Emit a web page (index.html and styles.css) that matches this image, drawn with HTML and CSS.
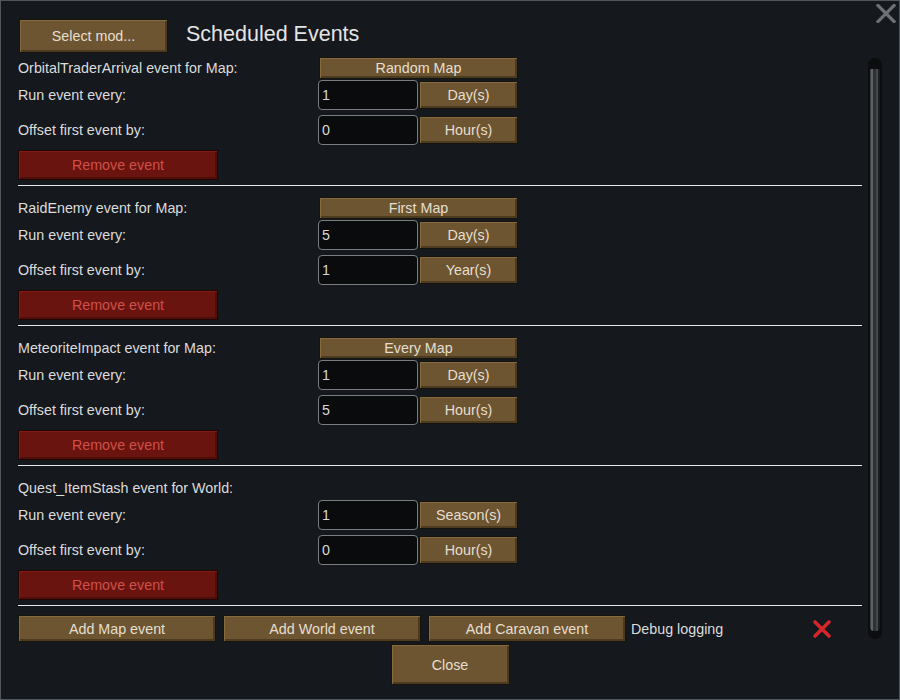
FILE: index.html
```html
<!DOCTYPE html>
<html>
<head>
<meta charset="utf-8">
<link rel="stylesheet" href="styles.css">
</head>
<body>
<div class="window">
  <svg class="close-x" width="20" height="19" viewBox="0 0 20 19">
    <path d="M2 1.5 L18 17.5 M18 1.5 L2 17.5" stroke="#6c7176" stroke-width="3.2" stroke-linecap="square"/>
  </svg>
  <div class="header">
    <div class="btn btn-mod">Select mod...</div>
    <div class="title">Scheduled Events</div>
  </div>
  <div class="main">
    <div class="list">
      <div class="section">
        <div class="row head"><div class="label">OrbitalTraderArrival event for Map:</div><div class="btn btn-map">Random Map</div></div>
        <div class="row r2"><div class="label">Run event every:</div><div class="input">1</div><div class="btn btn-unit">Day(s)</div></div>
        <div class="row r3"><div class="label">Offset first event by:</div><div class="input">0</div><div class="btn btn-unit">Hour(s)</div></div>
        <div class="btn-remove">Remove event</div>
        <div class="sep"></div>
      </div>
      <div class="section">
        <div class="row head"><div class="label">RaidEnemy event for Map:</div><div class="btn btn-map">First Map</div></div>
        <div class="row r2"><div class="label">Run event every:</div><div class="input">5</div><div class="btn btn-unit">Day(s)</div></div>
        <div class="row r3"><div class="label">Offset first event by:</div><div class="input">1</div><div class="btn btn-unit">Year(s)</div></div>
        <div class="btn-remove">Remove event</div>
        <div class="sep"></div>
      </div>
      <div class="section">
        <div class="row head"><div class="label">MeteoriteImpact event for Map:</div><div class="btn btn-map">Every Map</div></div>
        <div class="row r2"><div class="label">Run event every:</div><div class="input">1</div><div class="btn btn-unit">Day(s)</div></div>
        <div class="row r3"><div class="label">Offset first event by:</div><div class="input">5</div><div class="btn btn-unit">Hour(s)</div></div>
        <div class="btn-remove">Remove event</div>
        <div class="sep"></div>
      </div>
      <div class="section">
        <div class="row head"><div class="label">Quest_ItemStash event for World:</div></div>
        <div class="row r2"><div class="label">Run event every:</div><div class="input">1</div><div class="btn btn-unit">Season(s)</div></div>
        <div class="row r3"><div class="label">Offset first event by:</div><div class="input">0</div><div class="btn btn-unit">Hour(s)</div></div>
        <div class="btn-remove">Remove event</div>
        <div class="sep"></div>
      </div>
      <div class="actions">
        <div class="btn btn-add">Add Map event</div>
        <div class="btn btn-add">Add World event</div>
        <div class="btn btn-add">Add Caravan event</div>
        <div class="debug">Debug logging</div>
        <svg class="check" width="20" height="20" viewBox="0 0 20 20">
          <path d="M3 3 L17 17 M17 3 L3 17" stroke="#d4262b" stroke-width="3.6" stroke-linecap="round"/>
        </svg>
      </div>
    </div>
    <div class="scroll"><div class="thumb"></div></div>
  </div>
  <div class="footer">
    <div class="btn btn-close">Close</div>
  </div>
</div>
</body>
</html>
```

FILE: styles.css
```css
html, body {
  margin: 0;
  padding: 0;
  background: #15181d;
}
body {
  font-family: "Liberation Sans", Arial, sans-serif;
  font-size: 14.3px;
  color: #dcdcdc;
}
.window {
  position: relative;
  width: 900px;
  height: 700px;
  box-sizing: border-box;
  border: 1px solid #50565c;
  background: #15181d;
}
.close-x {
  position: absolute;
  top: 3px;
  right: 3px;
}
.header {
  display: flex;
  align-items: center;
  gap: 18px;
  height: 33px;
  margin: 18px 0 0 18px;
}
.title {
  font-size: 21.5px;
  color: #e4e4e4;
  padding-bottom: 3px;
}
.btn {
  box-sizing: border-box;
  flex: none;
  display: flex;
  align-items: center;
  justify-content: center;
  background: #6d5531;
  border: 1px solid #16140f;
  box-shadow: inset 1px 1px 0 #86693c, inset -2px -2px 0 #4d3b1f;
  color: #e6dfd0;
  white-space: nowrap;
}
.btn-mod {
  width: 149px;
  height: 34px;
}
.main {
  display: flex;
  margin-top: 5px;
}
.list {
  width: 844px;
  padding-left: 17px;
}
.row {
  display: flex;
  align-items: center;
}
.label {
  width: 300px;
  flex: none;
  white-space: nowrap;
}
.head {
  height: 22px;
}
.btn-map {
  width: 199px;
  height: 22px;
  margin-left: 1px;
}
.r2 {
  height: 30px;
  margin-top: 1px;
}
.r3 {
  height: 30px;
  margin-top: 5px;
}
.input {
  box-sizing: border-box;
  flex: none;
  width: 100px;
  height: 30px;
  background: #0a0b0c;
  border: 1px solid #7a7d80;
  border-radius: 4px;
  padding-left: 3px;
  display: flex;
  align-items: center;
  color: #d8d8d8;
}
.btn-unit {
  width: 99px;
  height: 28px;
  margin-left: 1px;
}
.btn-remove {
  box-sizing: border-box;
  width: 200px;
  height: 30px;
  margin-top: 5px;
  display: flex;
  align-items: center;
  justify-content: center;
  background: #6a140f;
  border: 1px solid #220604;
  box-shadow: inset 1px 1px 0 #7e1c15, inset -2px -2px 0 #4e0e0a;
  color: #cf4f4a;
}
.sep {
  height: 1px;
  background: #e8e8e8;
  margin: 5px 0 11px 0;
}
.actions {
  display: flex;
  align-items: center;
  gap: 7px;
  margin-top: -2px;
  height: 27px;
}
.btn-add {
  width: 198px;
  height: 27px;
}
.debug {
  width: 174px;
  flex: none;
  margin-left: -2px;
}
.check {
  flex: none;
}
.scroll {
  box-sizing: border-box;
  width: 14px;
  height: 581px;
  margin-left: 6px;
  margin-top: 1px;
  border-radius: 7px;
  background: #0b0d0f;
  padding: 11px 2px 8px 2px;
}
.thumb {
  height: 100%;
  border-radius: 0 0 4px 4px;
  background: linear-gradient(to right, #3f4245 0 1px, #5d6165 1px 3px, #2e3033 3px 6px, #45484b 6px 8px, #1b1d1f 8px 10px);
}
.footer {
  display: flex;
  justify-content: center;
  margin-top: 2px;
}
.btn-close {
  width: 119px;
  height: 41px;
}
```
